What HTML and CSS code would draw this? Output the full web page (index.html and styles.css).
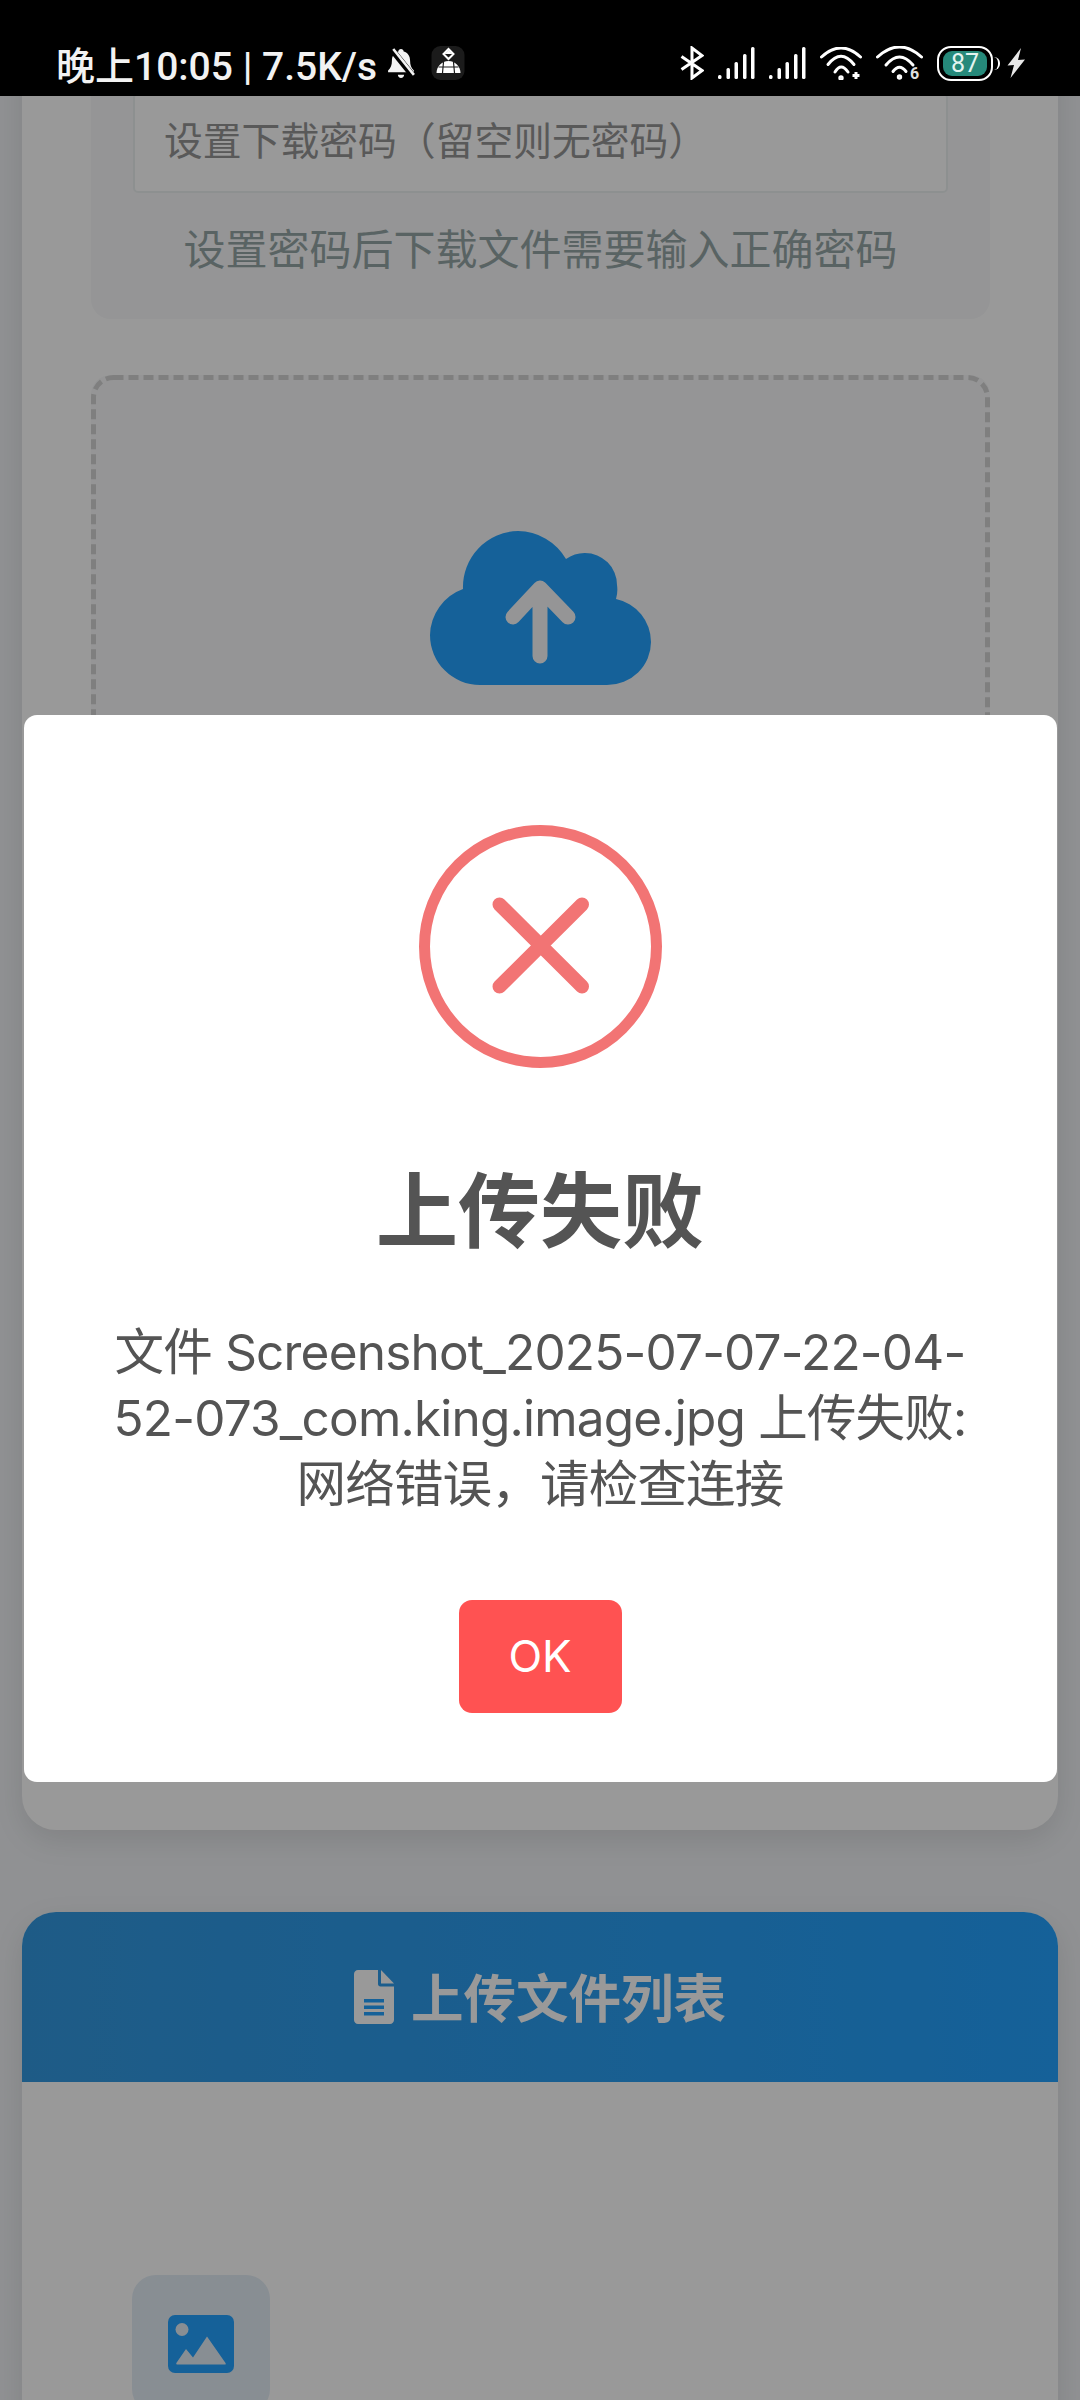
FILE: index.html
```html
<!DOCTYPE html>
<html lang="zh-CN">
<head>
<meta charset="UTF-8">
<meta name="viewport" content="width=device-width, initial-scale=1.0">
<title>文件上传</title>
<link rel="stylesheet" href="styles.css">
</head>
<body>
<div id="app">
  <header class="status-bar">
    <div class="status-left">
      <span class="status-text">晚上10:05 | 7.5K/s</span>
      <svg class="icon-bell" width="28" height="31" viewBox="0 0 27 30">
        <path d="M13.5 1c1.5 0 2.5 1 2.6 2.4 4.2 1.2 6.2 4.6 6.2 9 0 4.2 1 6.8 3.7 9.4v1.7H1v-1.7c2.700-2.600 3.700-5.200 3.700-9.400 0-4.400 2-7.800 6.200-9C11 2 12 1 13.500 1z" fill="#f2f2f2"/>
        <path d="M10.500 26h6c0 1.800-1.300 3-3 3s-3-1.200-3-3z" fill="#f2f2f2"/>
        <line x1="5" y1="2" x2="25" y2="27" stroke="#000" stroke-width="6"/>
        <line x1="6" y1="1" x2="26" y2="26" stroke="#f2f2f2" stroke-width="2.500"/>
      </svg>
      <svg class="icon-app" width="34" height="34" viewBox="0 0 33 34">
        <rect width="33" height="34" rx="9" fill="#1b1b1b"/>
        <path d="M17 3l5 5-5 5-5-5z" fill="none" stroke="#fff" stroke-width="2"/>
        <path d="M17 4l4 4H13z" fill="#fff"/>
        <path d="M5 27c0-6 5-12 12-12s12 6 12 12z" fill="#fff"/>
        <path d="M12 16l-1 11M22 16l1 11M7 21h20" stroke="#1b1b1b" stroke-width="1.200"/>
      </svg>
    </div>
    <div class="status-right">
      <svg width="24" height="34" viewBox="0 0 24 34" fill="none" stroke="#fff" stroke-width="3">
        <path d="M1.500 10.500L22 24.500 12 32V2l10 7.500L1.500 23.500"/>
      </svg>
      <svg width="37" height="33" viewBox="0 0 37 33" fill="#fff">
        <rect x="0" y="28" width="3.500" height="4" rx="1.500"/>
        <rect x="8.500" y="21" width="3.500" height="11" rx="1.500"/>
        <rect x="16.500" y="15" width="3.500" height="17" rx="1.500"/>
        <rect x="25" y="7" width="3.500" height="25" rx="1.500"/>
        <rect x="33" y="0" width="3.500" height="32" rx="1.500"/>
      </svg>
      <svg width="37" height="33" viewBox="0 0 37 33" fill="#fff">
        <rect x="0" y="28" width="3.500" height="4" rx="1.500"/>
        <rect x="8.500" y="21" width="3.500" height="11" rx="1.500"/>
        <rect x="16.500" y="15" width="3.500" height="17" rx="1.500"/>
        <rect x="25" y="7" width="3.500" height="25" rx="1.500"/>
        <rect x="33" y="0" width="3.500" height="32" rx="1.500"/>
      </svg>
      <svg width="42" height="33" viewBox="0 0 42 33" fill="none" stroke="#fff" stroke-width="3" stroke-linecap="round">
        <path d="M1.500 10Q21-8 40.500 10"/>
        <path d="M8 17.500Q21 1 34 17.500"/>
        <path d="M15 25Q21 15 28 25"/>
        <circle cx="21" cy="31" r="1.200"/>
        <path d="M36 25v7M32.500 28.500h7" stroke-linecap="butt"/>
      </svg>
      <svg class="icon-wifi6" width="47" height="38" viewBox="0 0 47 38" fill="none" stroke="#fff" stroke-width="3" stroke-linecap="round">
        <path d="M1.500 11Q23.500-9 45.500 11"/>
        <path d="M10 19Q23.500 3 37 19"/>
        <path d="M17 25.500Q23.500 17 30 25.500"/>
        <circle cx="23.500" cy="31" r="1.200"/>
        <text x="34" y="33" class="wifi-six">6</text>
      </svg>
      <div class="battery">
        <span class="battery-level">87</span>
      </div>
      <svg class="icon-bolt" width="18" height="30" viewBox="0 0 18 30">
        <path d="M14 0L.5 17.500 7 17 3.500 30 18 11.500l-7 .5z" fill="#e8e8e8"/>
      </svg>
    </div>
  </header>

  <div class="screen">
    <main class="page">
      <section class="card upload-card">
        <div class="password-panel">
          <input class="password-input" type="text" placeholder="设置下载密码（留空则无密码）">
          <p class="hint">设置密码后下载文件需要输入正确密码</p>
        </div>
        <div class="dropzone">
          <svg class="dropzone-border" width="899" height="1300" viewBox="0 0 899 1300">
            <rect x="2.500" y="2.500" width="894" height="1295" rx="20" fill="none" stroke="#d4d4d4" stroke-width="5" stroke-dasharray="10 5"/>
          </svg>
          <svg width="221" height="154" viewBox="0 0 221 154">
            <path d="M33 58A56 56 0 0 1 88 0A56 56 0 0 1 136 28A32 32 0 0 1 155 22A32 32 0 0 1 187 54A32 32 0 0 1 186 68A44 44 0 0 1 221 111A44 43 0 0 1 177 154H50A50 50 0 0 1 0 104A50 50 0 0 1 33 58z" fill="#23a2ff"/>
            <path d="M83 86L110 57L138 86M110 60V125" fill="none" stroke="#f8f9fa" stroke-width="15" stroke-linecap="round" stroke-linejoin="round"/>
          </svg>
        </div>
      </section>

      <section class="card files-card">
        <div class="files-header">
          <svg width="40" height="54" viewBox="0 0 40 54">
            <path d="M4 0h20v14c0 1.500 1 2.500 2.500 2.500H40V50c0 2.200-1.800 4-4 4H4c-2.200 0-4-1.800-4-4V4c0-2.200 1.800-4 4-4z" fill="#fff"/>
            <path d="M27 0l13 13.500H27z" fill="#fff"/>
            <path d="M10 29h20v3.500H10zM10 35.500h20V39H10zM10 42h20v3.500H10z" fill="#23a2ff"/>
          </svg>
          <h2 class="files-title">上传文件列表</h2>
        </div>
        <div class="files-body">
          <div class="file-tile">
            <svg width="66" height="58" viewBox="0 0 66 58">
              <rect width="66" height="58" rx="7" fill="#23a2ff"/>
              <circle cx="14" cy="14.500" r="6.500" fill="#e3edf6"/>
              <path d="M9 49.500q-1.500 0-.5-1.800L18 34l7 8.500L39 21.500l18.500 26.500q1 1.500-.5 1.500z" fill="#e3edf6"/>
            </svg>
          </div>
        </div>
      </section>
    </main>

    <div class="backdrop">
      <div class="modal">
        <svg class="modal-icon" width="243" height="243" viewBox="0 0 243 243">
          <circle cx="121.500" cy="121.500" r="116" fill="none" stroke="#f27474" stroke-width="11"/>
          <path d="M80.500 79.500L163 161.500M163 79.500L80.500 161.500" stroke="#f27474" stroke-width="14" stroke-linecap="round"/>
        </svg>
        <h1 class="modal-title">上传失败</h1>
        <p class="modal-text">文件 Screenshot_2025-07-07-22-04-52-073_com.king.image.jpg 上传失败: 网络错误，请检查连接</p>
        <button class="modal-btn">OK</button>
      </div>
    </div>
  </div>
</div>
</body>
</html>
```

FILE: styles.css
```css
html, body {
  margin: 0;
  padding: 0;
  height: 2400px;
  overflow: hidden;
  font-family: Roboto, "Noto Sans CJK SC", sans-serif;
  background-color: #000;
}

#app {
  display: flex;
  flex-direction: column;
  height: 2400px;
}

/* status bar */
.status-bar {
  display: flex;
  justify-content: space-between;
  align-items: center;
  box-sizing: border-box;
  height: 96px;
  padding: 30px 55px 0 56px;
  background-color: #000;
  color: #f2f2f2;
}

.status-left,
.status-right {
  display: flex;
  align-items: center;
}

.status-right {
  gap: 14px;
}

.status-text {
  font-size: 39px;
  font-weight: 500;
  white-space: nowrap;
}

.icon-bell {
  margin-left: 10px;
}

.icon-app {
  margin-left: 16px;
}

.icon-wifi6 {
  margin-top: 4px;
}

.icon-bolt {
  margin-left: -4px;
}

.wifi-six {
  font-family: Roboto, sans-serif;
  font-size: 16px;
  font-weight: 700;
  fill: #e0e0e0;
  stroke: none;
}

.battery {
  position: relative;
  box-sizing: border-box;
  display: flex;
  align-items: center;
  justify-content: center;
  width: 56px;
  height: 35px;
  margin-right: 4px;
  border: 2.5px solid #fff;
  border-radius: 14px;
}

.battery::after {
  content: "";
  position: absolute;
  right: -9px;
  top: 9px;
  width: 4px;
  height: 13px;
  border-right: 2px solid #fff;
  border-radius: 0 8px 8px 0;
}

.battery-level {
  display: flex;
  align-items: center;
  justify-content: center;
  width: 44px;
  height: 25px;
  border-radius: 9px;
  background-color: #26897a;
  color: #e4f4f0;
  font-size: 25px;
  line-height: 25px;
}

/* page under the dialog */
.screen {
  position: relative;
  flex: 1;
  overflow: hidden;
  background-color: #f0f2f5;
}

.page {
  margin-top: -60px;
  padding: 0 22px;
}

.card {
  background-color: #fff;
  border-radius: 34px;
  box-shadow: 0 10px 30px rgba(0, 0, 0, 0.1);
}

.upload-card {
  box-sizing: border-box;
  height: 1794px;
  padding: 0 68px 0 69px;
}

.password-panel {
  padding: 57px 42px 40px 42px;
  background-color: #f8f9fa;
  border-radius: 0 0 20px 20px;
}

.password-input {
  display: block;
  box-sizing: border-box;
  width: 100%;
  height: 100px;
  padding: 0 30px 3px 29px;
  background-color: #fff;
  border: 2px solid #ecf0f1;
  border-radius: 5px;
  font-family: inherit;
  font-size: 38.800px;
  outline: none;
}

.password-input::placeholder {
  color: #959595;
}

.hint {
  margin: 30px 0 0;
  color: #95a5a6;
  font-size: 42px;
  line-height: 56px;
  text-align: center;
}

.dropzone {
  position: relative;
  display: flex;
  flex-direction: column;
  align-items: center;
  box-sizing: border-box;
  height: 1300px;
  margin-top: 56px;
  padding-top: 156px;
  background-color: #f8f9fa;
  border-radius: 20px;
}

.dropzone-border {
  position: absolute;
  left: 0;
  top: 0;
}

.files-card {
  margin-top: 82px;
  overflow: hidden;
}

.files-header {
  display: flex;
  align-items: center;
  justify-content: center;
  gap: 17px;
  height: 170px;
  background: linear-gradient(90deg, #3398e0, #23a2ff);
}

.files-title {
  margin: -4px 0 0;
  color: #fff;
  font-size: 52.500px;
  font-weight: 700;
}

.files-body {
  padding: 193px 110px 60px;
}

.file-tile {
  display: flex;
  align-items: center;
  justify-content: center;
  width: 138px;
  height: 138px;
  border-radius: 24px;
  background-color: #e3edf6;
}

/* dialog */
.backdrop {
  position: absolute;
  inset: 0;
  display: flex;
  align-items: center;
  justify-content: center;
  background-color: rgba(0, 0, 0, 0.4);
}

.modal {
  display: flex;
  flex-direction: column;
  align-items: center;
  box-sizing: border-box;
  width: 1033px;
  padding: 110px 70px 69px;
  background-color: #fff;
  border-radius: 13px;
}

.modal-title {
  margin: 95px 0 0;
  color: #545454;
  font-size: 82px;
  font-weight: 700;
  line-height: 100px;
}

.modal-text {
  margin: 56px 0 0;
  color: #545454;
  font-family: Inter, "Noto Sans CJK SC", sans-serif;
  font-size: 49.500px;
  letter-spacing: -0.800px;
  line-height: 66px;
  text-align: center;
}

.modal-btn {
  width: 163px;
  height: 113px;
  margin-top: 83px;
  padding: 0;
  border: none;
  border-radius: 13px;
  background-color: #ff5252;
  color: #fff;
  font-family: Inter, sans-serif;
  font-size: 44px;
}
```
